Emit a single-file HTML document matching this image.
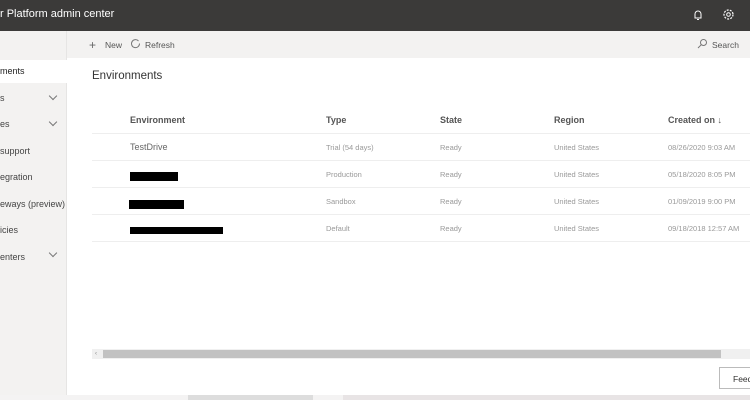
<!DOCTYPE html>
<html><head><meta charset="utf-8"><style>
*{margin:0;padding:0;box-sizing:border-box}
body{width:750px;height:400px;overflow:hidden;background:#fff;font-family:"Liberation Sans",sans-serif;position:relative;color:#323130}
.a{position:absolute;white-space:nowrap}
.hdr{left:0;top:0;width:750px;height:31px;background:#3b3a39}
.side{left:0;top:31px;width:67px;height:364px;background:#f3f2f1;border-right:1px solid #e6e5e4}
.tb{left:67px;top:31px;width:683px;height:27px;background:#f3f2f1}
.nav{left:0;font-size:9px;color:#444}
.chev{position:absolute;left:50px;width:6px;height:6px;border-right:1px solid #777;border-bottom:1px solid #777;transform:rotate(45deg)}
.th{font-size:9px;font-weight:bold;color:#555;top:115px}
.c{font-size:7.5px;color:#999}
.line{left:92px;width:658px;height:1px;background:#eee}
.blk{background:#000;height:9px}
</style></head><body>
<div class="a hdr"></div>
<div class="a" style="left:0;top:8px;color:#fff;font-size:11px">r Platform admin center</div>
<svg class="a" style="left:692px;top:9px" width="12" height="12" viewBox="0 0 12 12"><path d="M3 9V5a3 3 0 0 1 6 0v4zM5 10.5h2" stroke="#fff" fill="none" stroke-width="1"/></svg>
<svg class="a" style="left:722px;top:8px" width="13" height="13" viewBox="0 0 13 13"><circle cx="6.5" cy="6.5" r="4.5" stroke="#fff" fill="none" stroke-width="1.2" stroke-dasharray="2 1.2"/><circle cx="6.5" cy="6.5" r="1.8" stroke="#fff" fill="none"/></svg>
<div class="a side"></div>
<div class="a" style="left:0;top:60px;width:67px;height:23px;background:#fff"></div>
<div class="a nav" style="top:66px;color:#222">ments</div>
<div class="a nav" style="top:93px">s</div><div class="chev" style="top:93px"></div>
<div class="a nav" style="top:119px">es</div><div class="chev" style="top:119px"></div>
<div class="a nav" style="top:146px">support</div>
<div class="a nav" style="top:172px">egration</div>
<div class="a nav" style="top:199px">eways (preview)</div>
<div class="a nav" style="top:225px">icies</div>
<div class="a nav" style="top:252px">enters</div><div class="chev" style="top:250px"></div>
<div class="a tb"></div>
<div class="a" style="left:89px;top:38px;font-size:12px;color:#666">+</div>
<div class="a" style="left:105px;top:40px;font-size:8.5px;color:#555">New</div>
<svg class="a" style="left:130px;top:38px" width="11" height="11" viewBox="0 0 11 11"><path d="M8.5 3A4 4 0 1 0 9.5 5.5" stroke="#777" fill="none"/></svg>
<div class="a" style="left:145px;top:40px;font-size:8.5px;color:#555">Refresh</div>
<svg class="a" style="left:697px;top:38px" width="11" height="11" viewBox="0 0 11 11"><circle cx="6.5" cy="4.5" r="3" stroke="#777" fill="none"/><path d="M4.3 6.7L1 10" stroke="#777"/></svg>
<div class="a" style="left:712px;top:40px;font-size:8.5px;color:#555">Search</div>
<div class="a" style="left:92px;top:70px;font-size:11.5px;color:#333">Environments</div>
<div class="a th" style="left:130px">Environment</div>
<div class="a th" style="left:326px">Type</div>
<div class="a th" style="left:440px">State</div>
<div class="a th" style="left:554px">Region</div>
<div class="a th" style="left:668px">Created on ↓</div>
<div class="a line" style="top:133px"></div>
<div class="a line" style="top:160px"></div>
<div class="a line" style="top:187px"></div>
<div class="a line" style="top:214px"></div>
<div class="a line" style="top:241px"></div>
<div class="a" style="left:130px;top:142px;font-size:9px;color:#666">TestDrive</div>
<div class="a blk" style="left:130px;top:172px;width:48px"></div>
<div class="a blk" style="left:129px;top:200px;width:55px"></div>
<div class="a blk" style="left:130px;top:227px;width:93px;height:7px"></div>
<div class="a c" style="left:326px;top:143px">Trial (54 days)</div>
<div class="a c" style="left:326px;top:170px">Production</div>
<div class="a c" style="left:326px;top:197px">Sandbox</div>
<div class="a c" style="left:326px;top:224px">Default</div>
<div class="a c" style="left:440px;top:143px">Ready</div><div class="a c" style="left:440px;top:170px">Ready</div><div class="a c" style="left:440px;top:197px">Ready</div><div class="a c" style="left:440px;top:224px">Ready</div>
<div class="a c" style="left:554px;top:143px">United States</div><div class="a c" style="left:554px;top:170px">United States</div><div class="a c" style="left:554px;top:197px">United States</div><div class="a c" style="left:554px;top:224px">United States</div>
<div class="a c" style="left:668px;top:143px">08/26/2020 9:03 AM</div>
<div class="a c" style="left:668px;top:170px">05/18/2020 8:05 PM</div>
<div class="a c" style="left:668px;top:197px">01/09/2019 9:00 PM</div>
<div class="a c" style="left:668px;top:224px">09/18/2018 12:57 AM</div>
<div class="a" style="left:92px;top:349px;width:658px;height:10px;background:#f0f0f0"></div>
<div class="a" style="left:103px;top:350px;width:618px;height:8px;background:#c2c2c2"></div>
<div class="a" style="left:95px;top:351px;font-size:6px;color:#888">‹</div>
<div class="a" style="left:719px;top:367px;width:40px;height:22px;border:1px solid #bbb;background:#fff;font-size:8.5px;padding:6px 0 0 13px">Feedback</div>
<div class="a" style="left:0;top:395px;width:750px;height:5px;background:#f4f3f3"></div>
<div class="a" style="left:188px;top:395px;width:125px;height:5px;background:#ddd"></div>
<div class="a" style="left:343px;top:395px;width:407px;height:5px;background:#e8e4e5"></div>
</body></html>
